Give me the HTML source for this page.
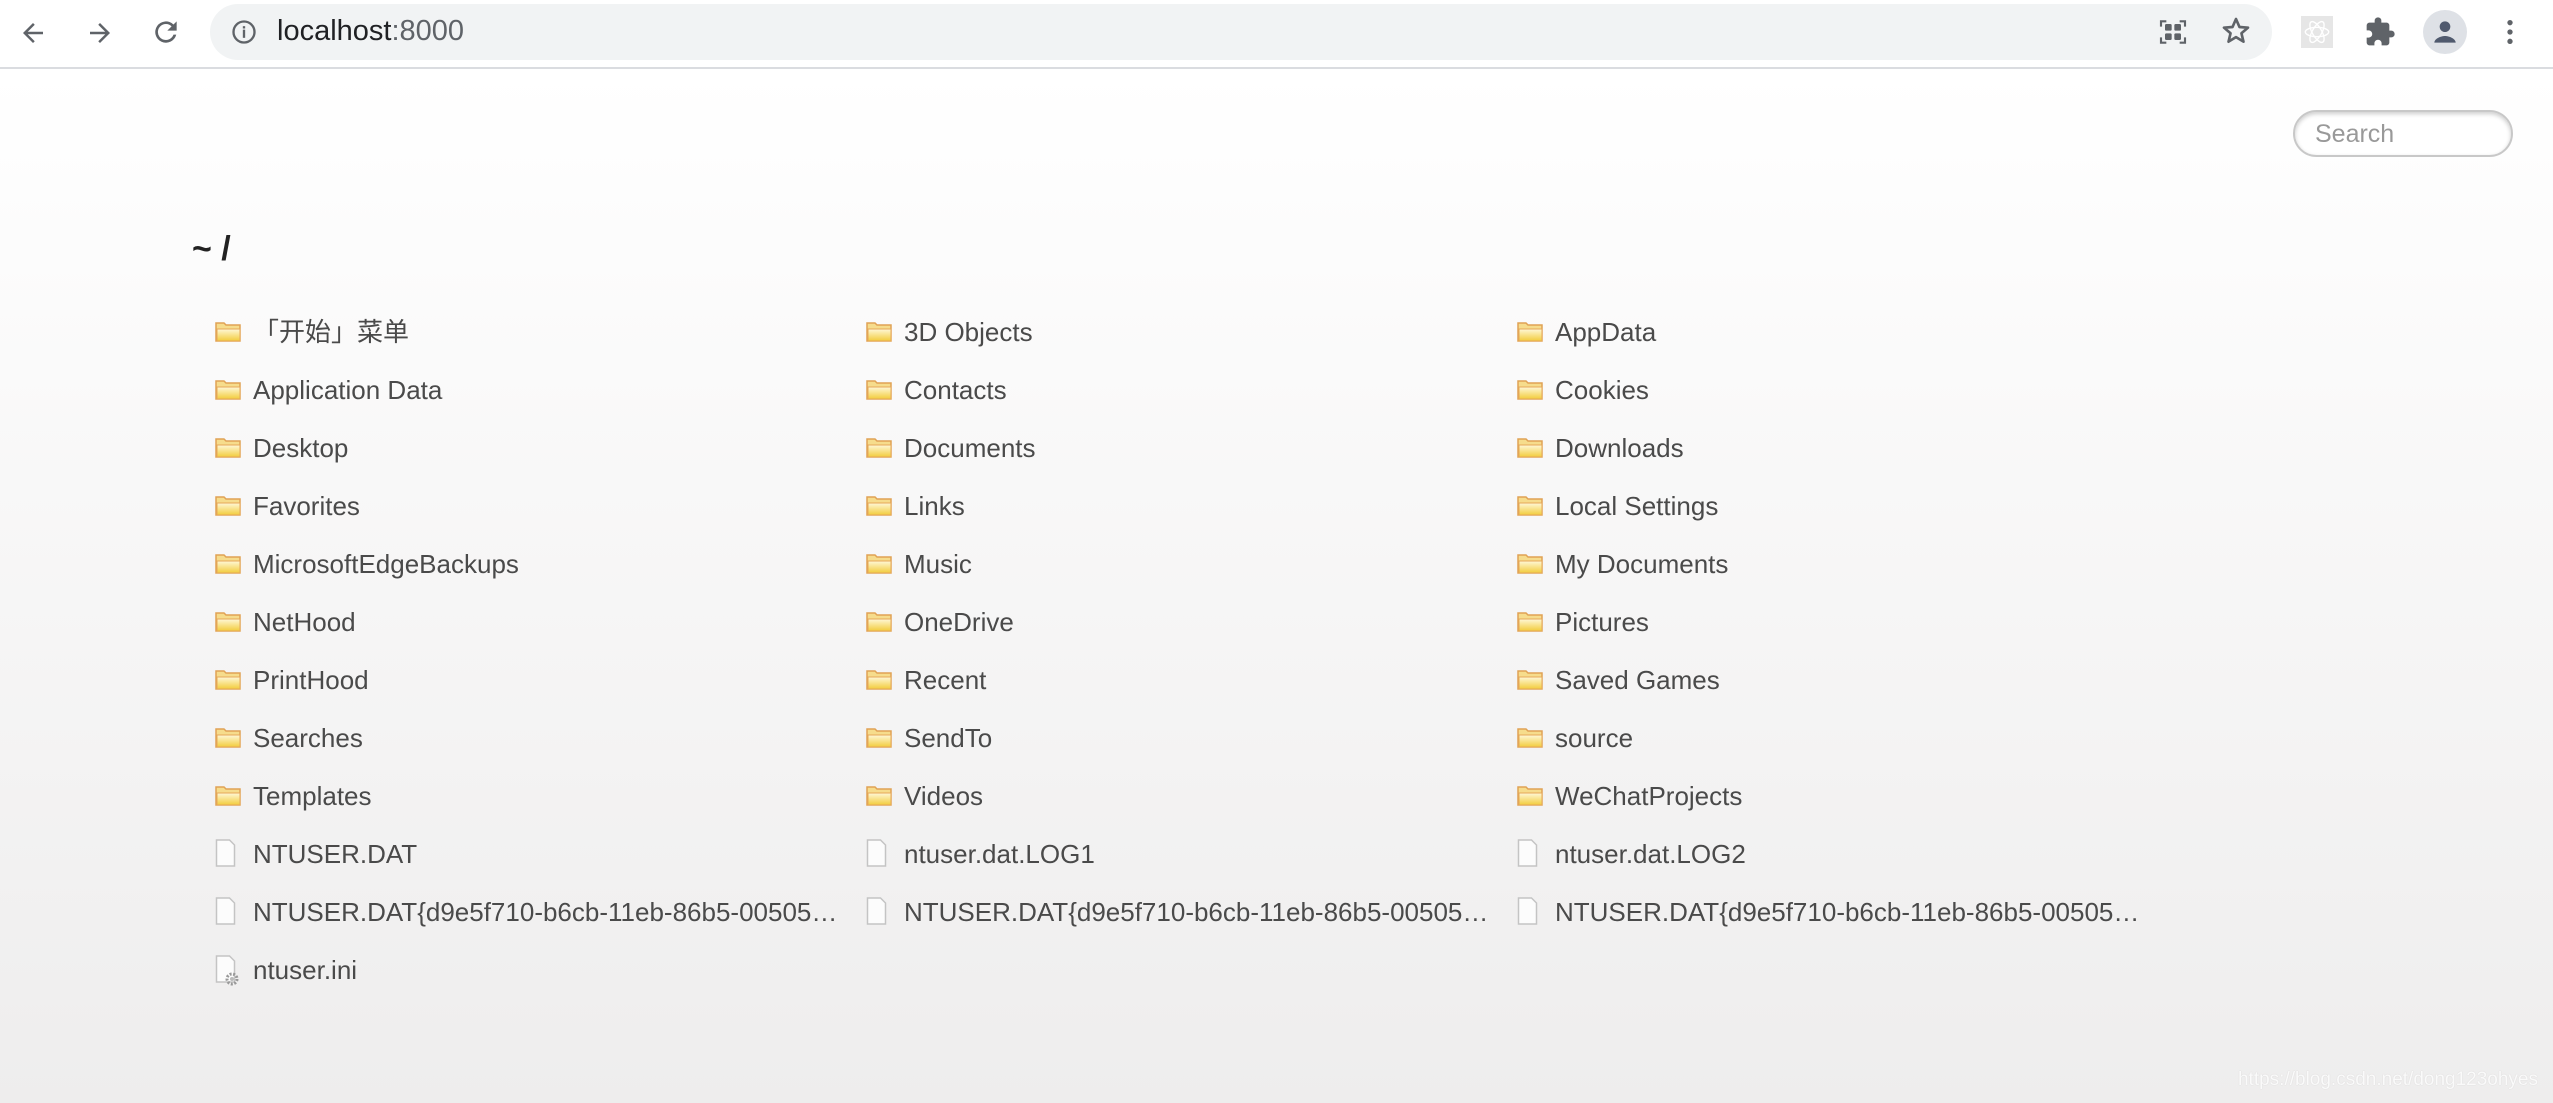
<!DOCTYPE html>
<html><head><meta charset="utf-8"><style>
*{margin:0;padding:0;box-sizing:border-box}
html,body{width:2553px;height:1103px;overflow:hidden}
body{font-family:"Liberation Sans","Noto Sans CJK SC",sans-serif;background:#fff;position:relative}
.tb{position:absolute;left:0;top:0;width:2553px;height:69px;background:#fff;border-bottom:2px solid #dadce0}
.omni{position:absolute;left:210px;top:4px;width:2062px;height:56px;border-radius:28px;background:#f1f3f4}
.url{position:absolute;left:277px;top:15px;font-size:29px;color:#202124}
.url span{color:#5f6368}
.page{position:absolute;left:0;top:71px;width:2553px;height:1032px;background:linear-gradient(#fff,#eeeded)}
.search{position:absolute;left:2293px;top:39px;width:220px;height:47px;border:2px solid #c8c8c8;border-radius:24px;box-shadow:inset 0 2px 4px rgba(0,0,0,.2);font-size:25px;color:#999;padding:8px 0 0 20px;background:#fff}
h1{position:absolute;left:192px;top:159px;font-size:34px;font-weight:bold;color:#222}
.it{position:absolute;height:40px;font-size:26px;color:#4a4a4a;white-space:nowrap;overflow:hidden;text-overflow:ellipsis;padding-left:38px;line-height:40px}
.it svg{position:absolute;left:0;top:8px}
.wm{position:absolute;right:15px;bottom:12px;font-size:19px;color:#fafafa;text-shadow:0 0 1px #ccc}
</style></head><body>
<div class="tb">
<svg style="position:absolute;left:18px;top:18px" width="30" height="30" viewBox="0 0 24 24"><path d="M20 11H7.8l5.6-5.6L12 4l-8 8 8 8 1.4-1.4L7.8 13H20z" fill="#5f6368"/></svg>
<svg style="position:absolute;left:85px;top:18px" width="30" height="30" viewBox="0 0 24 24"><path d="M12 4l-1.4 1.4 5.6 5.6H4v2h12.2l-5.6 5.6L12 20l8-8z" fill="#5f6368"/></svg>
<svg style="position:absolute;left:150px;top:16px" width="32" height="32" viewBox="0 0 24 24"><path d="M17.6 6.4A8 8 0 1 0 19.7 14h-2.1A6 6 0 1 1 12 6c1.7 0 3.1.7 4.2 1.8L13 11h7V4z" fill="#5f6368"/></svg>
<div class="omni"></div>
<svg style="position:absolute;left:230px;top:18px" width="28" height="28" viewBox="0 0 24 24"><circle cx="12" cy="12" r="9" fill="none" stroke="#5f6368" stroke-width="2"/><rect x="11" y="10" width="2" height="7" fill="#5f6368"/><rect x="11" y="7" width="2" height="2" fill="#5f6368"/></svg>
<div class="url">localhost<span>:8000</span></div>
<svg style="position:absolute;left:2157px;top:16px" width="32" height="32" viewBox="0 0 24 24"><path d="M3 8V4h4M17 4h4v4M21 16v4h-4M7 20H3v-4" fill="none" stroke="#5f6368" stroke-width="1.6"/><rect x="6" y="6" width="5" height="5" rx="1" fill="#5f6368"/><rect x="13" y="6" width="5" height="5" rx="1" fill="#5f6368"/><rect x="6" y="13" width="5" height="5" rx="1" fill="#5f6368"/><rect x="13" y="13" width="5" height="5" rx="1" fill="#5f6368"/></svg>
<svg style="position:absolute;left:2220px;top:15px" width="32" height="32" viewBox="0 0 24 24"><path d="M12 3l2.6 6 6.4.5-4.9 4.2 1.5 6.3L12 16.6 6.4 20l1.5-6.3L3 9.5 9.4 9z" fill="none" stroke="#5f6368" stroke-width="2" stroke-linejoin="round"/></svg>
<div style="position:absolute;left:2301px;top:16px;width:32px;height:32px;background:#e6e6e6"></div>
<svg style="position:absolute;left:2303px;top:18px" width="28" height="28" viewBox="0 0 24 24" fill="none" stroke="#fff" stroke-width="1.2"><ellipse cx="12" cy="12" rx="10" ry="4"/><ellipse cx="12" cy="12" rx="10" ry="4" transform="rotate(60 12 12)"/><ellipse cx="12" cy="12" rx="10" ry="4" transform="rotate(120 12 12)"/></svg>
<svg style="position:absolute;left:2364px;top:16px" width="32" height="32" viewBox="0 0 24 24"><path d="M20.5 11H19V7a2 2 0 0 0-2-2h-4V3.5a2.5 2.5 0 0 0-5 0V5H4a2 2 0 0 0-2 2v3.8h1.5a2.7 2.7 0 0 1 0 5.4H2V20a2 2 0 0 0 2 2h3.8v-1.5a2.7 2.7 0 0 1 5.4 0V22H17a2 2 0 0 0 2-2v-4h1.5a2.5 2.5 0 0 0 0-5z" fill="#5f6368"/></svg>
<div style="position:absolute;left:2423px;top:10px;width:44px;height:44px;border-radius:50%;background:#dee1e6"></div>
<svg style="position:absolute;left:2429px;top:16px" width="32" height="32" viewBox="0 0 24 24"><circle cx="12" cy="8" r="4" fill="#505a6e"/><path d="M4 20c0-3 5-5 8-5s8 2 8 5z" fill="#505a6e"/></svg>
<svg style="position:absolute;left:2494px;top:16px" width="32" height="32" viewBox="0 0 24 24"><circle cx="12" cy="5" r="2" fill="#5f6368"/><circle cx="12" cy="12" r="2" fill="#5f6368"/><circle cx="12" cy="19" r="2" fill="#5f6368"/></svg>
</div>
<div class="page">
<div class="search">Search</div>
<h1>~ /</h1>
<div id="list"></div>
<div class="wm">https://blog.csdn.net/dong123ohyes</div>
</div>
<svg width="0" height="0" style="position:absolute"><defs>
<linearGradient id="fg" x1="0" y1="0" x2="0" y2="1"><stop offset="0" stop-color="#fff8d8"/><stop offset="1" stop-color="#f2cc3c"/></linearGradient>
<g id="fo"><path d="M1 3h8l2 2h14v16H1z" fill="#f6dc8c" stroke="#e0a254" stroke-width="1.5"/><path d="M2 9h23v12H2z" fill="url(#fg)" stroke="#e6a858" stroke-width="1"/></g>
<g id="fi"><path d="M1.5 1h13l5 5v21h-18z" fill="#fcfcfc" stroke="#c4c4c4" stroke-width="1.5"/></g>
</defs></svg>
<script>
var items=[["f","「开始」菜单"],["f","3D Objects"],["f","AppData"],["f","Application Data"],["f","Contacts"],["f","Cookies"],["f","Desktop"],["f","Documents"],["f","Downloads"],["f","Favorites"],["f","Links"],["f","Local Settings"],["f","MicrosoftEdgeBackups"],["f","Music"],["f","My Documents"],["f","NetHood"],["f","OneDrive"],["f","Pictures"],["f","PrintHood"],["f","Recent"],["f","Saved Games"],["f","Searches"],["f","SendTo"],["f","source"],["f","Templates"],["f","Videos"],["f","WeChatProjects"],["d","NTUSER.DAT"],["d","ntuser.dat.LOG1"],["d","ntuser.dat.LOG2"],["d","NTUSER.DAT{d9e5f710-b6cb-11eb-86b5-005056c00008}.TM.blf"],["d","NTUSER.DAT{d9e5f710-b6cb-11eb-86b5-005056c00008}.TMContainer00000000000000000001.regtrans-ms"],["d","NTUSER.DAT{d9e5f710-b6cb-11eb-86b5-005056c00008}.TMContainer00000000000000000002.regtrans-ms"],["i","ntuser.ini"]];
var xs=[215,866,1517],h="";
items.forEach(function(t,i){var c=i%3,r=Math.floor(i/3);var ic;
if(t[0]=="f")ic='<svg width="27" height="24" viewBox="0 0 27 24"><use href="#fo"/></svg>';
else if(t[0]=="d")ic='<svg width="22" height="30" viewBox="0 0 22 30" style="top:5px"><use href="#fi"/></svg>';
else ic='<svg width="30" height="32" viewBox="0 0 30 32" style="top:5px"><use href="#fi"/><circle cx="17" cy="24" r="5" fill="none" stroke="#999" stroke-width="3" stroke-dasharray="2 1.5"/><circle cx="17" cy="24" r="2" fill="#bbb"/></svg>';
h+='<div class="it" style="left:'+xs[c]+'px;top:'+(241+r*58)+'px;width:630px">'+ic+t[1]+'</div>';});
document.getElementById("list").innerHTML=h;
</script>
</body></html>
